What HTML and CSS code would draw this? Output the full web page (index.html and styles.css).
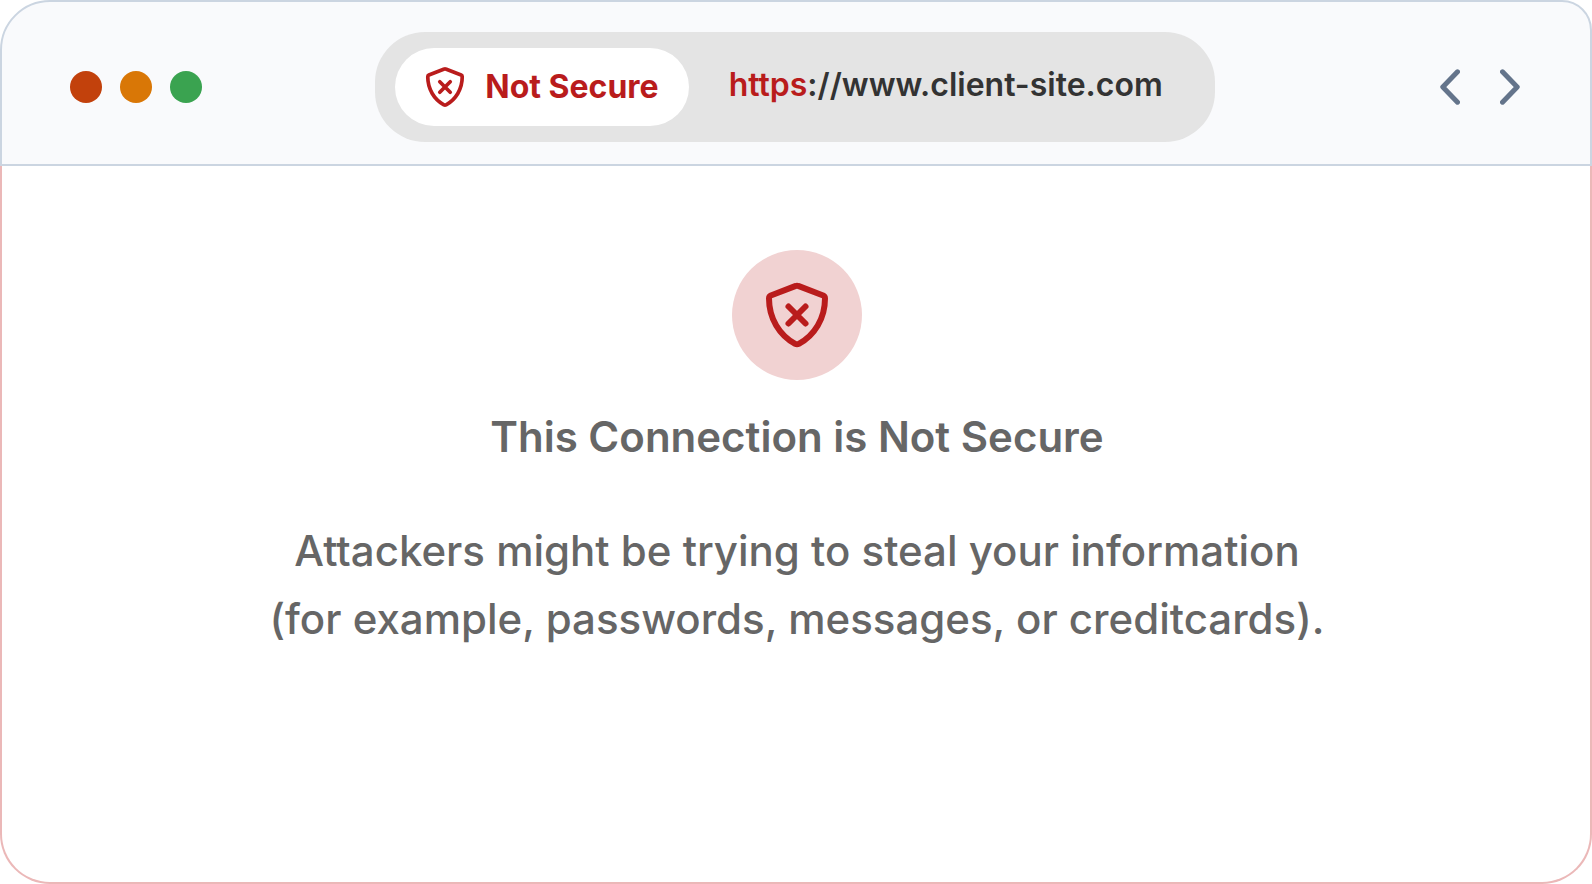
FILE: index.html
```html
<!DOCTYPE html>
<html lang="en">
<head>
    <meta charset="UTF-8">
    <meta name="viewport" content="width=device-width, initial-scale=1.0">
    <title>This Connection is Not Secure</title>
    <link rel="stylesheet" href="styles.css">
</head>
<body>
    <!-- Shield icon, used in the address bar and in the page -->
    <svg class="sprite" aria-hidden="true">
        <symbol id="shield" viewBox="0 0 62 65">
            <path d="M29.8 3.4 Q31 2.9 32.2 3.4 L57.2 13 Q59 13.8 59 16 C59 36 48.5 53 32.8 61.4 Q31 62.3 29.2 61.4 C13.5 53 3 36 3 16 Q3 13.8 4.8 13 Z"/>
            <path d="M22.5 24 L39.5 41 M39.5 24 L22.5 41"/>
        </symbol>
    </svg>

    <div class="browser">
        <header class="toolbar">
            <div class="dots">
                <span class="dot red"></span>
                <span class="dot orange"></span>
                <span class="dot green"></span>
            </div>

            <div class="address-bar">
                <div class="badge">
                    <svg class="badge-icon" aria-hidden="true"><use href="#shield"/></svg>
                    <span>Not Secure</span>
                </div>
                <a class="url" href="https://www.client-site.com"><span class="scheme">https</span>://www.client-site.com</a>
            </div>

            <nav class="nav">
                <button class="nav-button" type="button" aria-label="Back">
                    <svg viewBox="0 0 20 36"><path d="M17.5 2.8 L2.8 18 L17.5 33.2"/></svg>
                </button>
                <button class="nav-button" type="button" aria-label="Forward">
                    <svg viewBox="0 0 20 36"><path d="M2.5 2.8 L17.2 18 L2.5 33.2"/></svg>
                </button>
            </nav>
        </header>

        <main class="page">
            <div class="warning-icon">
                <svg aria-hidden="true"><use href="#shield"/></svg>
            </div>
            <h1>This Connection is Not Secure</h1>
            <p>Attackers might be trying to steal your information<br>(for example, passwords, messages, or creditcards).</p>
        </main>
    </div>
</body>
</html>
```
FILE: styles.css
```css
* {
    box-sizing: border-box;
}

body {
    margin: 0;
    background-color: #fff;
    color: #666;
    font-family: Inter, sans-serif;
}

.sprite {
    display: none;
}

.browser {
    display: flex;
    flex-direction: column;
    min-height: 100vh;
}

/* Toolbar */
.toolbar {
    display: grid;
    grid-template-columns: 1fr auto 1fr;
    align-items: center;
    padding: 30px 70px 22px 68px;
    background-color: #f9fafc;
    border: 2px solid #cbd5e1;
    border-radius: 50px 30px 0 0;
}

.dots {
    display: flex;
    gap: 18px;
}

.dot {
    width: 32px;
    height: 32px;
    border-radius: 50%;
}

.red {
    background-color: #c2410c;
}

.orange {
    background-color: #d97706;
}

.green {
    background-color: #3aa350;
}

.address-bar {
    display: flex;
    align-items: center;
    gap: 40px;
    padding: 16px 52px 16px 20px;
    background-color: #e4e4e4;
    border-radius: 50px;
    font-size: 32px;
    line-height: 38px;
}

.badge {
    display: flex;
    align-items: center;
    gap: 20px;
    padding: 19px 30px;
    background-color: #fff;
    border-radius: 40px;
    color: #b91c1c;
    font-weight: 700;
}

.badge-icon {
    width: 40px;
    height: 40px;
}

.url {
    padding-bottom: 4px;
    color: #333;
    font-weight: 600;
    text-decoration: none;
}

.scheme {
    color: #b91c1c;
}

.nav {
    display: flex;
    justify-content: flex-end;
    gap: 40px;
}

.nav-button {
    padding: 0;
    background: none;
    border: none;
    cursor: pointer;
}

.nav-button svg {
    display: block;
    width: 20px;
    height: 36px;
    fill: none;
    stroke: #64748b;
    stroke-width: 5;
    stroke-linecap: round;
    stroke-linejoin: round;
}

.badge-icon,
.warning-icon svg {
    fill: none;
    stroke: #b91c1c;
    stroke-width: 6;
    stroke-linecap: round;
    stroke-linejoin: round;
}

/* Page content */
.page {
    flex: 1;
    display: flex;
    flex-direction: column;
    align-items: center;
    padding: 84px 40px 84px 42px;
    border: 2px solid #ebb8b8;
    border-top: none;
    border-radius: 0 0 50px 50px;
    text-align: center;
}

.warning-icon {
    display: flex;
    align-items: center;
    justify-content: center;
    width: 130px;
    height: 130px;
    background-color: #f1d2d2;
    border-radius: 50%;
}

.warning-icon svg {
    width: 62px;
    height: 66px;
}

h1,
p {
    font-size: 42px;
    line-height: 68px;
}

h1 {
    margin: 23px 0 46px;
    font-weight: 600;
}

p {
    margin: 0;
    font-weight: 500;
}
```
